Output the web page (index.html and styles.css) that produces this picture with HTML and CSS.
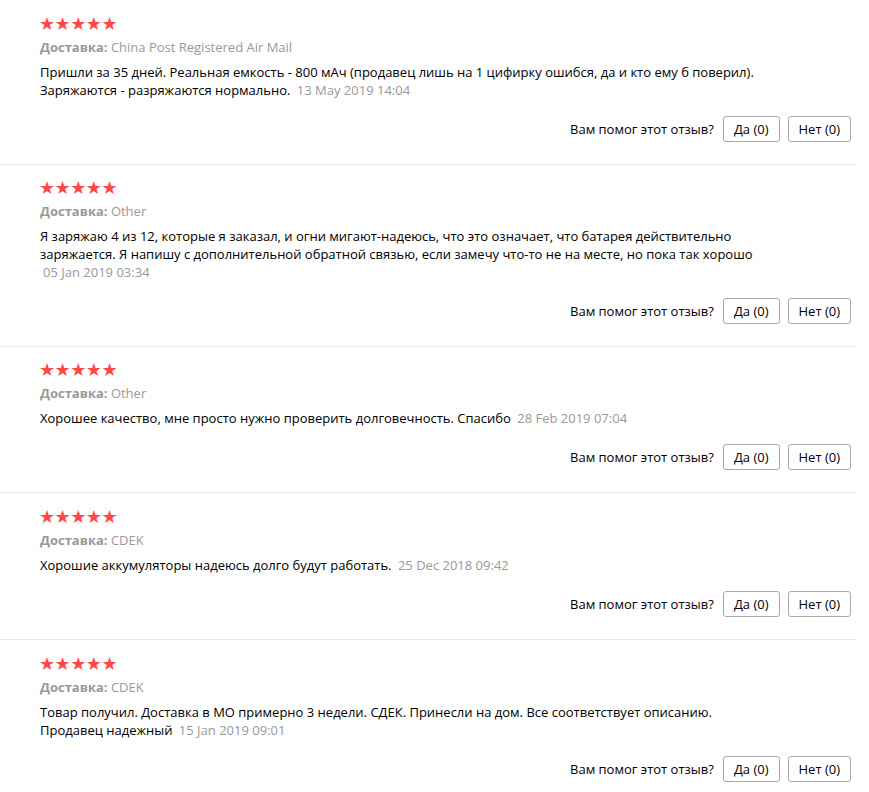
FILE: index.html
```html
<!DOCTYPE html>
<html lang="ru">
<head>
<meta charset="utf-8">
<link rel="stylesheet" href="styles.css">
</head>
<body>
<div class="feedback-list">

  <div class="review">
    <div class="stars"><span class="star">★</span><span class="star">★</span><span class="star">★</span><span class="star">★</span><span class="star">★</span></div>
    <div class="delivery"><b>Доставка:</b> China Post Registered Air Mail</div>
    <div class="text">Пришли за 35 дней. Реальная емкость - 800 мАч (продавец лишь на 1 цифирку ошибся, да и кто ему б поверил).<br>Заряжаются - разряжаются нормально. <span class="date">13 May 2019 14:04</span></div>
    <div class="actions"><span class="helpful">Вам помог этот отзыв?</span><button class="btn">Да (0)</button><button class="btn">Нет (0)</button></div>
  </div>

  <div class="review">
    <div class="stars"><span class="star">★</span><span class="star">★</span><span class="star">★</span><span class="star">★</span><span class="star">★</span></div>
    <div class="delivery"><b>Доставка:</b> Other</div>
    <div class="text">Я заряжаю 4 из 12, которые я заказал, и огни мигают-надеюсь, что это означает, что батарея действительно заряжается. Я напишу с дополнительной обратной связью, если замечу что-то не на месте, но пока так хорошо <span class="date">05 Jan 2019 03:34</span></div>
    <div class="actions"><span class="helpful">Вам помог этот отзыв?</span><button class="btn">Да (0)</button><button class="btn">Нет (0)</button></div>
  </div>

  <div class="review">
    <div class="stars"><span class="star">★</span><span class="star">★</span><span class="star">★</span><span class="star">★</span><span class="star">★</span></div>
    <div class="delivery"><b>Доставка:</b> Other</div>
    <div class="text">Хорошее качество, мне просто нужно проверить долговечность. Спасибо <span class="date">28 Feb 2019 07:04</span></div>
    <div class="actions"><span class="helpful">Вам помог этот отзыв?</span><button class="btn">Да (0)</button><button class="btn">Нет (0)</button></div>
  </div>

  <div class="review">
    <div class="stars"><span class="star">★</span><span class="star">★</span><span class="star">★</span><span class="star">★</span><span class="star">★</span></div>
    <div class="delivery"><b>Доставка:</b> CDEK</div>
    <div class="text">Хорошие аккумуляторы надеюсь долго будут работать. <span class="date">25 Dec 2018 09:42</span></div>
    <div class="actions"><span class="helpful">Вам помог этот отзыв?</span><button class="btn">Да (0)</button><button class="btn">Нет (0)</button></div>
  </div>

  <div class="review">
    <div class="stars"><span class="star">★</span><span class="star">★</span><span class="star">★</span><span class="star">★</span><span class="star">★</span></div>
    <div class="delivery"><b>Доставка:</b> CDEK</div>
    <div class="text">Товар получил. Доставка в МО примерно 3 недели. СДЕК. Принесли на дом. Все соответствует описанию.<br>Продавец надежный <span class="date">15 Jan 2019 09:01</span></div>
    <div class="actions"><span class="helpful">Вам помог этот отзыв?</span><button class="btn">Да (0)</button><button class="btn">Нет (0)</button></div>
  </div>

</div>
</body>
</html>
```
FILE: styles.css
```css
html, body {
  margin: 0;
  padding: 0;
  background: #fff;
}
body {
  padding-top: 1px;
  font-family: "Open Sans", "DejaVu Sans", sans-serif;
  font-size: 13px;
  color: #000;
}
.feedback-list {
  width: 857px;
}
.review {
  padding: 15px 6px 22px 40px;
  border-bottom: 1px solid #e8e8e8;
}
.review:nth-child(n+4) {
  padding-top: 16px;
}
.stars {
  display: flex;
  height: 16px;
  line-height: 16px;
}
.star {
  color: #ff4747;
  font-family: "DejaVu Sans", sans-serif;
  font-size: 18px;
  width: 15.6px;
  margin-left: -1px;
  margin-right: 1px;
}
.delivery {
  margin-top: 6px;
  line-height: 18px;
  color: #999;
}
.delivery b {
  font-weight: 700;
}
.text {
  margin-top: 7px;
  line-height: 18px;
  width: 760px;
}
.date {
  display: inline-block;
  margin-left: 3px;
  color: #999;
}
.actions {
  margin-top: 17px;
  display: flex;
  justify-content: flex-end;
  align-items: center;
  gap: 8px;
}
.helpful {
  margin-right: 1px;
  font-size: 13px;
}
.btn {
  height: 26px;
  padding: 0 10px;
  border: 1px solid #aaa;
  border-radius: 3px;
  background: #fff;
  font-family: "Open Sans", "DejaVu Sans", sans-serif;
  font-size: 13px;
  color: #000;
}
```
